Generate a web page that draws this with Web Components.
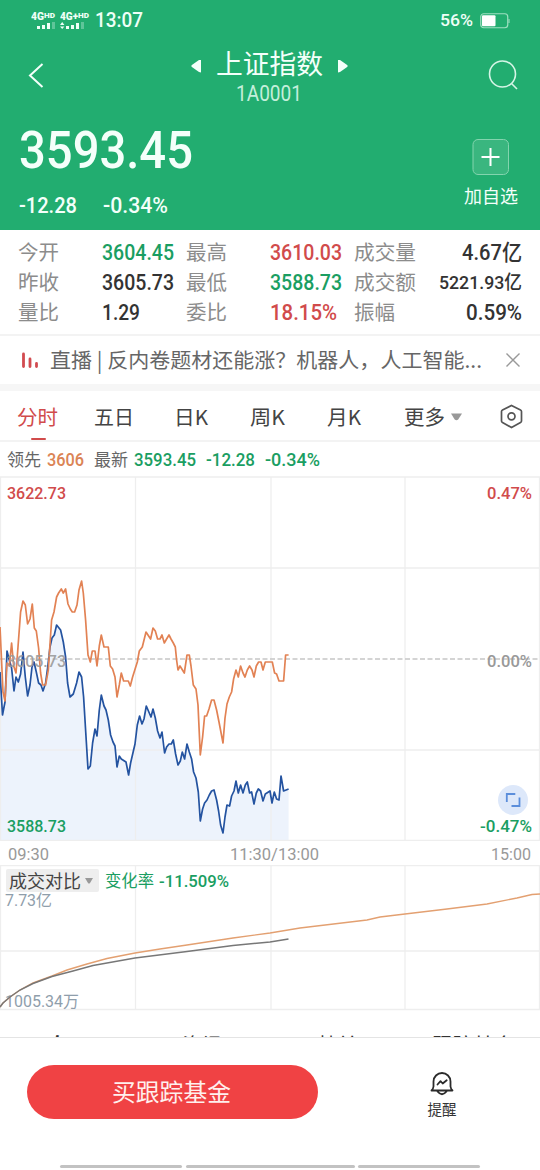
<!DOCTYPE html>
<html lang="zh-CN">
<head>
<meta charset="utf-8">
<title>上证指数</title>
<style>
    body {
        margin: 0;
        width: 540px;
        height: 1170px;
        overflow: hidden;
        background: #fff;
        --up: #d14b4b;
        --down: #1a9e62;
        --cjk: "Noto Sans CJK SC", sans-serif;
        --num: Roboto, "Noto Sans CJK SC", sans-serif;
        font-family: var(--cjk);
    }
</style>
</head>
<body>
<x-app></x-app>
<script>
/**
 * Single line of text squeezed or stretched to a fixed width.
 * Attributes: w - width, size - font size, weight, num - use the digits font
 */
class FitText extends HTMLElement {
    constructor() {
        super();
        this.attachShadow({mode: 'open'});
    }

    connectedCallback() {
        const size = this.getAttribute('size') || 18;
        const weight = this.getAttribute('weight') || 400;
        const width = Number(this.getAttribute('w'));
        const family = this.hasAttribute('num') ? '--num' : '--cjk';

        this.shadowRoot.innerHTML = `
            <style>
            :host {
                display: block;
                flex: none;
                width: ${width}px;
                height: ${size}px;
                font: ${weight} ${size}px/1 var(${family});
                white-space: nowrap;
            }
            span {
                display: inline-block;
                transform-origin: 0 50%;
            }
            </style>
            <span>${this.textContent}</span>
        `;
        const span = this.shadowRoot.querySelector('span');
        const natural = span.getBoundingClientRect().width;
        if (natural) {
            span.style.transform = `scaleX(${width / natural})`;
        }
    }
}

customElements.define('fit-text', FitText);

class StatusBar extends HTMLElement {
    constructor() {
        super();
        this.attachShadow({mode: 'open'});
        this.shadowRoot.innerHTML = `
            <style>
            :host {
                display: flex;
                align-items: center;
                height: 42px;
                padding: 0 30px 0 31px;
                box-sizing: border-box;
                color: #effff7;
            }
            .sim { width: 24px; margin: -1px 5px 0 0; }
            .sim + .sim { width: 30px; }
            .net { display: flex; align-items: flex-start; }
            svg { display: block; }
            .time { margin: 0 auto 0 0; }
            .battery { margin-left: 7px; }
            </style>
            <div class="sim">
                <div class="net"><fit-text num w="13" size="10" weight="900">4G</fit-text><fit-text num w="11" size="7.500" weight="900">HD</fit-text></div>
                <svg width="24" height="7" fill="currentColor"><rect x="6" y="4" width="3" height="3"/><rect x="11" y="3" width="3" height="4"/><rect x="16" y="1" width="3" height="6"/><rect x="21" y="0" width="3" height="7" opacity=".3"/></svg>
            </div>
            <div class="sim">
                <div class="net"><fit-text num w="18" size="10" weight="900">4G+</fit-text><fit-text num w="11" size="7.500" weight="900">HD</fit-text></div>
                <svg width="26" height="7" fill="currentColor"><path d="M0 3L2.200 0l2.200 3zM0 4.500h4.400l-2.200 2.500z"/><rect x="6" y="4" width="3" height="3"/><rect x="11" y="3" width="3" height="4"/><rect x="16" y="1" width="3" height="6"/><rect x="21" y="0" width="3" height="7" opacity=".3"/></svg>
            </div>
            <fit-text class="time" num w="48" size="19.500" weight="500">13:07</fit-text>
            <fit-text num w="33" size="16" weight="500">56%</fit-text>
            <svg class="battery" width="30" height="16">
                <rect x=".75" y=".75" width="27" height="14" rx="3" fill="none" stroke="#9fe0c1" stroke-width="1.200"/>
                <rect x="2" y="2.200" width="13.500" height="11" rx="1" fill="#fff"/>
                <path d="M29 6v4" stroke="#9fe0c1"/>
            </svg>
        `;
    }
}

customElements.define('x-status-bar', StatusBar);

class QuoteHeader extends HTMLElement {
    constructor() {
        super();
        this.attachShadow({mode: 'open'});
        this.shadowRoot.innerHTML = `
            <style>
            :host {
                display: block;
                height: 229.5px;
                background: #22ad70;
                color: #f4fffa;
            }
            svg { display: block; flex: none; }
            nav {
                display: flex;
                justify-content: space-between;
                padding: 5px 21px 0 28px;
                height: 68px;
                box-sizing: border-box;
            }
            .back { margin-top: 15.5px; }
            .search { margin-top: 12px; }
            .title { padding-left: 6px; }
            .name { display: flex; align-items: center; gap: 15px; height: 30px; }
            .name svg { margin-top: 8px; }
            .code { margin: 6px auto 0; color: #c4efdb; }
            .price {
                display: flex;
                justify-content: space-between;
                padding: 15px 22px 0 19px;
            }
            .change { display: flex; gap: 26px; margin-top: 18px; }
            .add {
                display: flex;
                flex-direction: column;
                align-items: center;
                padding-top: 13px;
            }
            .add fit-text { margin-top: 10px; }
            </style>
            <x-status-bar></x-status-bar>
            <nav>
                <svg class="back" width="16" height="25" fill="none" stroke="currentColor" stroke-width="2"><path d="M14.500 1L2 12.500 14.500 24"/></svg>
                <div class="title">
                    <div class="name">
                        <svg width="10" height="14" fill="currentColor"><path d="M10 1v12.500L8 13 .5 7.800v-1.500L8 1z"/></svg>
                        <fit-text w="107" size="27">上证指数</fit-text>
                        <svg width="10" height="14" fill="currentColor"><path d="M0 1v12.500L2 13l7.500-5.200v-1.500L2 1z"/></svg>
                    </div>
                    <fit-text class="code" num w="66" size="21.500">1A0001</fit-text>
                </div>
                <svg class="search" width="31" height="32" fill="none" stroke="#d5f5e6" stroke-width="1.600"><circle cx="14.500" cy="15" r="13"/><path d="M23.500 24.500l5.500 5.500"/></svg>
            </nav>
            <div class="price">
                <div>
                    <fit-text num w="174" size="52" weight="500">3593.45</fit-text>
                    <div class="change">
                        <fit-text num w="58" size="21.500" weight="500">-12.28</fit-text>
                        <fit-text num w="65" size="21.500" weight="500">-0.34%</fit-text>
                    </div>
                </div>
                <div class="add">
                    <svg width="38" height="38"><rect x="1" y="1.500" width="35.500" height="35" rx="5" fill="#3ab67f" stroke="#83d4ae"/><path d="M9.500 19h18M18.500 10v18" stroke="#fff" stroke-width="2"/></svg>
                    <fit-text w="54" size="18">加自选</fit-text>
                </div>
            </div>
        `;
    }
}

customElements.define('x-quote-header', QuoteHeader);

class StatGrid extends HTMLElement {
    constructor() {
        super();
        this.attachShadow({mode: 'open'});
        // label, label width, value, value width, colour, font size
        const stats = [
            ['今开', 41, '3604.45', 72, 'var(--down)'],
            ['最高', 41, '3610.03', 72, 'var(--up)'],
            ['成交量', 62, '4.67亿', 60, '#333'],
            ['昨收', 41, '3605.73', 72, '#333'],
            ['最低', 41, '3588.73', 72, 'var(--down)'],
            ['成交额', 62, '5221.93亿', 83, '#333', 19],
            ['量比', 41, '1.29', 38, '#333'],
            ['委比', 41, '18.15%', 67, 'var(--up)'],
            ['振幅', 41, '0.59%', 56, '#333']
        ];
        this.shadowRoot.innerHTML = `
            <style>
            :host {
                display: grid;
                grid-template-columns: 84px 84px 84px 84px 62px 1fr;
                grid-auto-rows: 30px;
                align-items: center;
                height: 106px;
                padding: 8px 18px 0 18px;
                box-sizing: border-box;
                border-bottom: 2px solid #f3f3f3;
            }
            .label { margin-top: -2px; color: #8c8c8c; }
            .value:nth-of-type(6n) { justify-self: end; }
            </style>
            ${stats.map(([label, lw, value, vw, color, size = 21.5]) => `
                <fit-text class="label" w="${lw}" size="20.700">${label}</fit-text>
                <fit-text class="value" num w="${vw}" size="${size}" weight="500" style="color: ${color}">${value}</fit-text>
            `).join('')}
        `;
    }
}

customElements.define('x-stat-grid', StatGrid);

class LiveBanner extends HTMLElement {
    constructor() {
        super();
        this.attachShadow({mode: 'open'});
        this.shadowRoot.innerHTML = `
            <style>
            :host {
                display: flex;
                align-items: center;
                height: 55.500px;
                padding: 0 19px 0 21px;
                box-sizing: border-box;
                border-bottom: 7px solid #f6f6f6;
                color: #666;
            }
            ::slotted(fit-text) { margin: 0 auto 0 11px; }
            </style>
            <svg width="18" height="18" stroke="#d24b50" stroke-width="2.800" stroke-linecap="round"><path d="M2.500 3v12.500M9 8v7.500M15.500 12.500v3"/></svg>
            <slot></slot>
            <svg width="16" height="16" stroke="#999" stroke-width="1.400"><path d="M1.500 1.500l13 13M14.500 1.500L1.500 14.500"/></svg>
        `;
    }
}

customElements.define('x-live-banner', LiveBanner);

class PeriodTabs extends HTMLElement {
    constructor() {
        super();
        this.attachShadow({mode: 'open'});
        this.shadowRoot.innerHTML = `
            <style>
            :host {
                display: flex;
                align-items: center;
                height: 51px;
                padding: 1px 17px 0 17px;
                box-sizing: border-box;
                border-bottom: 2px solid #f3f3f3;
                color: #444;
            }
            .active {
                position: relative;
                color: var(--up);
            }
            .active::after {
                content: "";
                position: absolute;
                left: 13.500px;
                top: 32px;
                width: 15px;
                height: 2.500px;
                border-radius: 1px;
                background: var(--up);
            }
            .caret { margin: 1px auto 0 6px; }
            </style>
            <fit-text class="active" w="41" size="20.500">分时</fit-text>
            <fit-text w="40" size="20.500" style="margin-left: 36px">五日</fit-text>
            <fit-text w="34" size="20.500" style="margin-left: 40px">日K</fit-text>
            <fit-text w="35" size="20.500" style="margin-left: 42px">周K</fit-text>
            <fit-text w="34" size="20.500" style="margin-left: 42px">月K</fit-text>
            <fit-text w="41" size="20.500" style="margin-left: 43px">更多</fit-text>
            <svg class="caret" width="12" height="8"><path d="M0 .5h11L7.200 6.500q-1.700 1.300-3.500 0z" fill="#999"/></svg>
            <svg width="23" height="25" fill="none" stroke="#555" stroke-width="1.700"><path d="M11.500 1.500L20.500 6q1 .5 1 1.500v9.500q0 1-1 1.500l-9 5-9-5q-1-.5-1-1.500V7.500q0-1 1-1.500z"/><circle cx="11.500" cy="12.300" r="3.500"/></svg>
        `;
    }
}

customElements.define('x-period-tabs', PeriodTabs);

class ChartLegend extends HTMLElement {
    constructor() {
        super();
        this.attachShadow({mode: 'open'});
        this.shadowRoot.innerHTML = `
            <style>
            :host {
                display: flex;
                align-items: center;
                height: 34px;
                padding-left: 7px;
                box-sizing: border-box;
                color: #666;
            }
            .lead { margin: 0 10px 0 6px; color: #db8455; }
            .last { margin-left: 6px; }
            .last, .last ~ * { color: var(--down); }
            .last ~ * { margin-left: 10px; }
            .lead, .last, .last ~ * { margin-top: 2px; }
            </style>
            <fit-text w="34" size="17.500">领先</fit-text>
            <fit-text class="lead" num w="37" size="18" weight="500">3606</fit-text>
            <fit-text w="34" size="17.500">最新</fit-text>
            <fit-text class="last" num w="62" size="18" weight="500">3593.45</fit-text>
            <fit-text num w="49" size="18" weight="500">-12.28</fit-text>
            <fit-text num w="55" size="18" weight="500">-0.34%</fit-text>
        `;
    }
}

customElements.define('x-chart-legend', ChartLegend);

// both series are x,y pairs, y counted from the top of the page
const LEADING = '0,627 3,692 5,701 7,663 9.3,666 11.6,643 13.7,666 16,673 18,647 20.6,612 23,601 25.3,605 27.6,624 30,619 32.3,604 34.3,628 36.3,631 38.6,648 40.6,673 42.6,685 45.6,685 48.3,670 51.6,620 54,612 56.6,597 58.6,593 61.3,589 63.3,593 65.6,589 68,604 70.3,609 72.3,612 74.6,612 77,605 79,590 81.6,581 83.3,593 85.6,620 88,655 90.3,662 92.3,651 95,651 97,666 99.3,646 101.3,635 104,647 108.3,647 110.3,666 112.6,669 115,677 117,697 119.3,685 121.3,673 123.6,681 128.3,681 130.3,686 132.6,677 137.3,662 139.3,651 142.3,647 146,632 150.6,639 153,628 155.3,631 157.6,639 160,639 162,635 164.3,643 166.6,639 169,635 171,639 173.3,643 175.3,647 176.6,660 178,670 180,666 184.3,673 187,655 189.3,655 191,666 193.3,685 196,689 198,705 200.3,755 202.6,737 204.6,716 206.6,716 209,709 211.6,700 214,700 216.6,710 219,722 223,743 225,718 227,704 229.3,697 231.6,692 233.6,679 236,670 238.3,677 240.6,666 243,673 245,677 247.3,670 249.6,666 252,670 254,677 256.3,666 258.6,662 261,662 263,670 265.3,662 272.3,662 274.6,673 276.6,674 279,681 283.6,681 285.6,655 288.6,655';
const LATEST = '0,672 2.5,715 5,702 7,651 9.3,660 11.6,668 14,691 16,677 18.3,682 20.6,674 23,652 25.3,677 27.6,696 30,685 32,667 34,662 36.3,672 38.6,683 41,685 43,691 45.6,683 47.6,668 50,647 52,638 54.3,635 56.6,625 60.6,630 63.3,642 65.6,657 67.6,683 70,697 73.3,694 76.6,683 79,672 81.6,677 83.6,697 85.6,730 88,769 90.3,766 92.6,743 95,729 97,736 99.3,710 101.3,695 104,706 106,710 108.3,720 110.6,735 113,742 115,746 117,767 119.3,756 121.3,759 126,762 128.6,775 130.6,763 135,744 137.3,725 139.6,716 142,724 144,719 146.3,706 151,717 153,709 155.3,718 157.6,731 160,738 162,732 164.6,753 166.6,747 169,744 171.3,744 173.3,740 175.6,754 178,765 180.3,761 182.3,752 184.6,759 187,744 189.3,752 191.6,759 193.6,772 196,778 198.3,792 200.3,821 202.6,809 204.6,803 207,800 209.3,795 211.6,791 214,790 216.6,800 218.6,811 220.6,825 223,833 225,817 227,805 229.6,806 231.6,796 234,791 236,781 238.3,793 240.6,785 243,793 245.3,785 247.3,782 249.6,793 251.6,792 254,804 256.3,793 258.3,789 260.6,791 263,801 265.3,794 270,791 272,803 274.3,792 276.6,799 279,800 281,776 283.6,791 288.6,789';

class PriceChart extends HTMLElement {
    constructor() {
        super();
        this.attachShadow({mode: 'open'});
        this.shadowRoot.innerHTML = `
            <style>
            :host {
                display: block;
                height: 389px;
            }
            svg { display: block; }
            text { font: 500 16.500px var(--num); }
            .grid { stroke: #eee; stroke-width: 1.300; }
            .axis {
                display: grid;
                grid-template-columns: 222px 1fr 40px;
                align-items: center;
                height: 24px;
                padding: 2px 9px 0 8px;
                box-sizing: border-box;
                color: #999;
            }
            </style>
            <svg width="540" height="365" viewBox="0 476 540 365">
                <polygon points="0,841 ${LATEST} 288.6,841" fill="#edf3fc"/>
                <path class="grid" d="M0 477h540M0 568h540M0 750h540M0 840.500h540M.5 477v364M135.500 477v364M271 477v364M405 477v364M539.500 477v364"/>
                <path d="M0 659h540" stroke="#c6c6c6" stroke-width="1.600" stroke-dasharray="5 2.500"/>
                <g fill="none" stroke-width="1.700" stroke-linejoin="round">
                    <polyline points="${LATEST}" stroke="#2453a0"/>
                    <polyline points="${LEADING}" stroke="#e28254"/>
                </g>
                <text x="7" y="499" textLength="59" lengthAdjust="spacingAndGlyphs" fill="#d14b4b">3622.73</text>
                <text x="487" y="499" textLength="45" lengthAdjust="spacingAndGlyphs" fill="#d14b4b">0.47%</text>
                <text x="7" y="667" textLength="59" lengthAdjust="spacingAndGlyphs" fill="#999" fill-opacity=".9">3605.73</text>
                <text x="487" y="667" textLength="45" lengthAdjust="spacingAndGlyphs" fill="#999">0.00%</text>
                <text x="7" y="832" textLength="59" lengthAdjust="spacingAndGlyphs" fill="#1a9e62">3588.73</text>
                <text x="480" y="832" textLength="52" lengthAdjust="spacingAndGlyphs" fill="#1a9e62">-0.47%</text>
                <circle cx="513" cy="800" r="15" fill="#dde8fa"/>
                <path d="M506.800 802v-8h8.500M511.500 806h8v-8.500" fill="none" stroke="#5b8edb" stroke-width="1.800"/>
            </svg>
            <div class="axis">
                <fit-text num w="41" size="17">09:30</fit-text>
                <fit-text num w="89" size="17">11:30/13:00</fit-text>
                <fit-text num w="40" size="17">15:00</fit-text>
            </div>
        `;
    }
}

customElements.define('x-price-chart', PriceChart);

class VolumeChart extends HTMLElement {
    constructor() {
        super();
        this.attachShadow({mode: 'open'});
        this.shadowRoot.innerHTML = `
            <style>
            :host {
                display: block;
                position: relative;
                height: 146px;
            }
            svg { display: block; }
            text { font: 400 16px var(--num); fill: #8f9eab; }
            .grid { stroke: #eee; stroke-width: 1.300; }
            .bar {
                position: absolute;
                left: 6px;
                top: 4px;
                display: flex;
                align-items: center;
                color: var(--down);
            }
            .select {
                display: flex;
                align-items: center;
                gap: 4px;
                width: 93px;
                height: 23px;
                margin-right: 6px;
                padding: 0 0 2px 3px;
                box-sizing: border-box;
                border-radius: 2px;
                background: #eee;
                color: #444;
            }
            .select svg { margin-top: 2px; }
            .rate { margin: 2px 0 0 5px; }
            </style>
            <svg width="540" height="146" viewBox="0 865 540 146">
                <path class="grid" d="M0 865.700h540M0 951h540M0 1009.500h540M.5 865v145M135.500 865v145M271 865v145M405 865v145M539.500 865v145"/>
                <text x="5" y="906" textLength="47" lengthAdjust="spacingAndGlyphs">7.73亿</text>
                <text x="5" y="1006.500" textLength="74" lengthAdjust="spacingAndGlyphs">1005.34万</text>
                <g fill="none" stroke-width="1.400">
                    <polyline stroke="#e3a071" points="0,1007 3,1003 10,997 20,990 33,983 52,976 67,970 87,964 107,958.500 135,953 160,949 187,945 233,938 270,933 300,928 367,920 380,917 405,914 447,909 487,904 517,898 532,894.500 540,894"/>
                    <polyline stroke="#777" points="0,1007 3,1003 10,997 20,990 33,983.500 52,976.500 73,971 93,965.500 135,958 187,951.500 233,945.500 270,942 288.500,939"/>
                </g>
            </svg>
            <div class="bar">
                <div class="select">
                    <fit-text w="72" size="18">成交对比</fit-text>
                    <svg width="8" height="6"><path d="M0 0h8L5 5q-1 1-2 0z" fill="#999"/></svg>
                </div>
                <fit-text w="49" size="16.500">变化率</fit-text>
                <fit-text class="rate" num w="70" size="17" weight="500">-11.509%</fit-text>
            </div>
        `;
    }
}

customElements.define('x-volume-chart', VolumeChart);

class SectionTabs extends HTMLElement {
    constructor() {
        super();
        this.attachShadow({mode: 'open'});
        // only the tops of the tabs show above the footer
        this.shadowRoot.innerHTML = `
            <style>
            :host {
                display: grid;
                grid-template-columns: repeat(4, 1fr);
                justify-items: center;
                height: 26px;
                padding-top: 24px;
                box-sizing: border-box;
                overflow: hidden;
                color: #333;
            }
            </style>
            <fit-text w="40" size="20" weight="700">盘口</fit-text>
            <fit-text w="40" size="20">资讯</fit-text>
            <fit-text w="40" size="20">特关</fit-text>
            <fit-text w="82" size="20">跟踪基金</fit-text>
        `;
    }
}

customElements.define('x-section-tabs', SectionTabs);

class BottomBar extends HTMLElement {
    constructor() {
        super();
        this.attachShadow({mode: 'open'});
        this.shadowRoot.innerHTML = `
            <style>
            :host {
                display: flex;
                flex-direction: column;
                justify-content: space-between;
                height: 133px;
                box-sizing: border-box;
                border-top: 1px solid #e4e4e4;
                background: #fff;
            }
            .actions { display: flex; padding: 27px 0 0 27px; }
            .buy {
                display: flex;
                align-items: center;
                justify-content: center;
                width: 291px;
                height: 54px;
                padding: 0 3px 2px 0;
                border: 0;
                border-radius: 27px;
                background: #f04244;
                color: #fff0ee;
            }
            .remind {
                display: flex;
                flex-direction: column;
                align-items: center;
                gap: 5px;
                margin: 6px 0 0 109.500px;
                color: #333;
            }
            .gesture { display: flex; gap: 3.500px; padding: 0 60px 2px; }
            .gesture i { flex: 122; height: 3.500px; border-radius: 2px; background: #c2c2c2; }
            .gesture i:nth-child(2) { flex: 169; }
            </style>
            <div class="actions">
                <button class="buy"><fit-text w="119" size="24">买跟踪基金</fit-text></button>
                <div class="remind">
                    <svg width="24" height="26" fill="none" stroke="#2b2b2b" stroke-width="1.800" stroke-linejoin="round" stroke-linecap="round">
                        <path d="M3.500 15.500V10.500a8.500 8.500 0 0 1 17 0v5q.3 2.500 2 4h-21q1.700-1.500 2-4zM7.500 20.500q4.500 5.500 9 0"/>
                        <path d="M7.500 13.500l3-3.300 2.200 2.300 4-3.300"/>
                    </svg>
                    <fit-text w="29" size="14.500">提醒</fit-text>
                </div>
            </div>
            <div class="gesture"><i></i><i></i><i></i></div>
        `;
    }
}

customElements.define('x-bottom-bar', BottomBar);

class App extends HTMLElement {
    constructor() {
        super();
        this.attachShadow({mode: 'open'});
        this.shadowRoot.innerHTML = `
            <style>
            :host {
                display: flex;
                flex-direction: column;
                width: 540px;
                height: 1170px;
            }
            :host > * { flex: none; }
            </style>
            <x-quote-header></x-quote-header>
            <x-stat-grid></x-stat-grid>
            <x-live-banner><fit-text w="432" size="20.700">直播 | 反内卷题材还能涨？机器人，人工智能...</fit-text></x-live-banner>
            <x-period-tabs></x-period-tabs>
            <x-chart-legend></x-chart-legend>
            <x-price-chart></x-price-chart>
            <x-volume-chart></x-volume-chart>
            <x-section-tabs></x-section-tabs>
            <x-bottom-bar></x-bottom-bar>
        `;
    }
}

customElements.define('x-app', App);
</script>
</body>
</html>
